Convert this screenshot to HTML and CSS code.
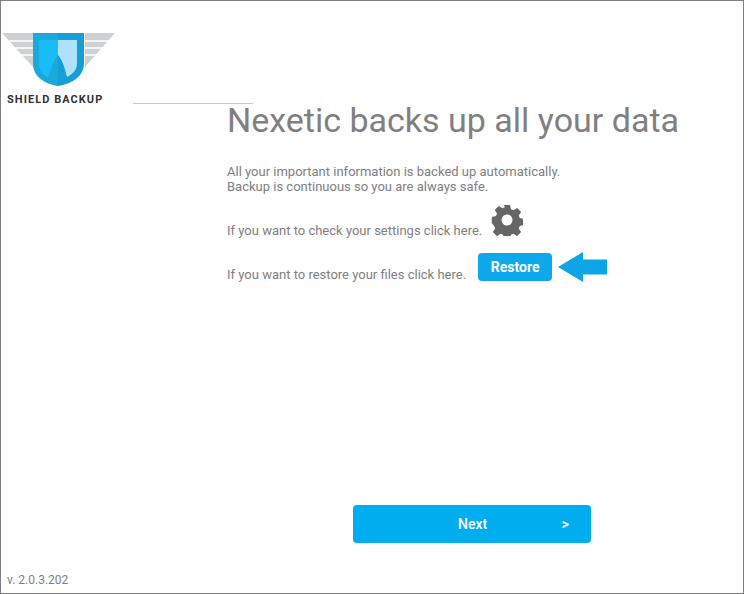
FILE: index.html
```html
<!DOCTYPE html>
<html lang="en">
<head>
  <meta charset="UTF-8">
  <title>Shield Backup</title>
  <link rel="stylesheet" href="styles.css">
</head>
<body>
  <div class="ventana">
    <div class="logo">
      <svg class="logo-img" width="116" height="56" viewBox="0 0 116 56">
        <!-- alas -->
        <path fill="#cfd0d2" d="M1 0H114L84 34V0H32V34Z"/>
        <path fill="none" stroke="#fff" stroke-width="1.5" d="M8 8H32M14 15H32M20 22H32M84 8H108M84 15H102M84 22H96"/>
        <!-- escudo -->
        <path fill="#26b5ec" d="M32 0H57V53C44 51 32 44 32 30Z"/>
        <path fill="#159fd6" d="M57 0H83V30C83 44 70 51 57 53Z"/>
        <path fill="#0f9cc9" d="M32 0H57V7H38V30C38 38 42 42 47 44L51 30L57 22V53C44 51 32 44 32 30Z" opacity=".45"/>
        <path fill="#19bdf6" d="M38 7H57V22C52 28 50 36 47 44C42 42 38 38 38 30Z"/>
        <path fill="#aee1fb" d="M57 7H76V30C76 37 72 41 66 44C64 36 62 28 57 22Z"/>
      </svg>
      <div class="logo-texto">SHIELD BACKUP</div>
    </div>
    <div class="linea"></div>

    <div class="contenido">
      <h1>Nexetic backs up all your data</h1>
      <p class="intro">All your important information is backed up automatically.<br>Backup is continuous so you are always safe.</p>
      <div class="fila fila-ajustes">
        <span>If you want to check your settings click here.</span>
        <svg class="engrane" width="32" height="32" viewBox="0 0 32 32">
          <path fill="#666" fill-rule="evenodd" d="M13 1h6l1 4.2 2.4 1 3.700-2.300 4 4-2.300 3.700 1 2.400 4.200 1v6l-4.200 1-1 2.400 2.300 3.700-4 4-3.700-2.300-2.400 1-1 4.200h-6l-1-4.200-2.400-1-3.700 2.300-4-4 2.300-3.700-1-2.400L.8 19v-6l4.200-1 1-2.400-2.300-3.700 4-4 3.700 2.300 2.400-1ZM16 10.500a5.500 5.500 0 1 0 0 11 5.500 5.500 0 0 0 0-11Z"/>
        </svg>
      </div>
      <div class="fila fila-restaurar">
        <span>If you want to restore your files click here.</span>
        <button class="btn-restore">Restore</button>
        <svg class="flecha" width="49" height="30" viewBox="0 0 49 30">
          <path fill="#0ea5e6" d="M0 15 25 0V7.500H49V22.500H25V30Z"/>
        </svg>
      </div>
    </div>

    <div class="pie-boton">
      <button class="btn-next"><span>Next</span><span class="mayor">&gt;</span></button>
    </div>
    <div class="version">v. 2.0.3.202</div>
  </div>
</body>
</html>
```

FILE: styles.css
```css
html, body {
  margin: 0;
  padding: 0;
}

body {
  font-family: Roboto, Arial, sans-serif;
  background-color: white;
  color: #808080;
}

.ventana {
  box-sizing: border-box;
  width: 744px;
  height: 594px;
  border: 1px solid #808080;
  display: flex;
  flex-direction: column;
  overflow: hidden;
}

.logo {
  height: 102px;
  padding-top: 32px;
  box-sizing: border-box;
}

.logo-img {
  display: block;
}

.logo-texto {
  margin: 5px 0 0 6px;
  font-size: 11px;
  line-height: 11px;
  font-weight: 700;
  letter-spacing: 1.05px;
  color: #333;
}

.linea {
  width: 120px;
  height: 1px;
  margin-left: 132px;
  background-color: #c8c8cc;
}

.contenido {
  margin-left: 226px;
}

h1 {
  margin: 0;
  font-size: 34px;
  line-height: 32px;
  font-weight: 400;
  color: #808080;
}

.intro {
  margin: 28px 0 0;
  font-size: 13px;
  line-height: 15px;
}

.fila {
  display: flex;
  font-size: 13px;
  line-height: 15px;
}

.fila-ajustes {
  margin-top: 10px;
  align-items: flex-end;
}

.fila-ajustes span {
  padding-bottom: 0;
}

.engrane {
  margin-left: 9px;
  margin-bottom: 2px;
}

.fila-restaurar {
  margin-top: 14px;
  align-items: flex-end;
}

.btn-restore {
  width: 74px;
  height: 28px;
  margin-left: 12px;
  margin-bottom: 1px;
  border: 0;
  border-radius: 4px;
  background-color: #0fa8ea;
  color: white;
  font-family: Roboto, Arial, sans-serif;
  font-size: 14px;
  font-weight: 700;
}

.flecha {
  margin-left: 6px;
  margin-bottom: 0;
}

.pie-boton {
  margin-top: auto;
  padding-left: 352px;
}

.btn-next {
  display: flex;
  width: 238px;
  height: 38px;
  padding: 0 22px 0 105px;
  justify-content: space-between;
  align-items: center;
  box-sizing: border-box;
  border: 0;
  border-radius: 4px;
  background-color: #00aeef;
  color: white;
  font-family: Roboto, Arial, sans-serif;
  font-size: 14px;
  font-weight: 500;
}

.mayor {
  font-weight: 700;
}

.version {
  margin: 30px 0 6px 6px;
  font-size: 12px;
  line-height: 14px;
}
```
